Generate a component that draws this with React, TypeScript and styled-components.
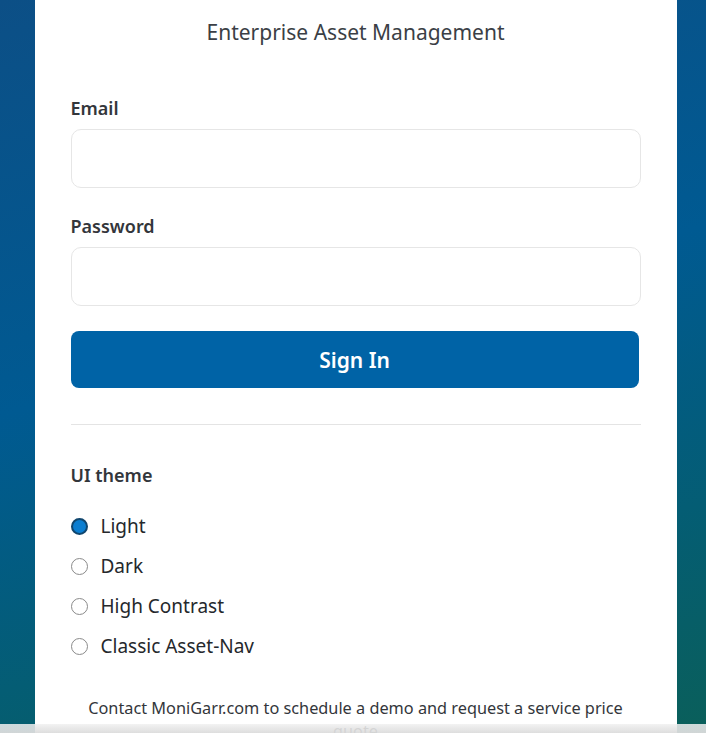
import React, { useState } from 'react';
import styled, { createGlobalStyle } from 'styled-components';

const GlobalStyle = createGlobalStyle`
	html, body {
		margin: 0;
		padding: 0;
		height: 100%;
		overflow: hidden;
	}
	body {
		font-family: "Noto Sans", "Open Sans", sans-serif;
		background: linear-gradient(165deg, #0c4f86 0%, #005a92 45%, #045d74 75%, #0a5f5a 100%);
	}
	#root {
		height: 100%;
	}
`;

const Page = styled.div`
	height: 100%;
	display: flex;
	justify-content: center;
	padding-left: 35px;
	padding-right: 30px;
	box-sizing: border-box;
`;

const Card = styled.main`
	flex: 1;
	background: #fff;
	padding: 18px 36px 0;
	box-sizing: border-box;
	display: flex;
	flex-direction: column;
`;

const Subtitle = styled.h2`
	margin: 0;
	text-align: center;
	font-size: 21px;
	font-weight: 400;
	color: #3b3f46;
	line-height: 28px;
`;

const Form = styled.form`
	display: flex;
	flex-direction: column;
	margin-top: 50px;
`;

const FieldLabel = styled.label`
	font-size: 18px;
	font-weight: 600;
	color: #33363b;
	line-height: 24px;
	margin-bottom: 9px;
`;

const TextInput = styled.input`
	height: 59px;
	border: 1px solid #e6e6e6;
	border-radius: 10px;
	padding: 0 14px;
	font-size: 16px;
	font-family: inherit;
	box-sizing: border-box;
	margin-bottom: 26px;
	width: 570px;
	outline: none;
`;

const SubmitButton = styled.button`
	height: 57px;
	width: 568px;
	border: none;
	border-radius: 8px;
	background: #0063a6;
	color: #fff;
	font-family: inherit;
	font-size: 21px;
	font-weight: 600;
	margin-top: -1px;
	cursor: pointer;
`;

const Divider = styled.hr`
	border: none;
	border-top: 1px solid #e4e4e4;
	margin: 36px 0 0;
	width: 570px;
`;

const SectionLabel = styled.div`
	font-size: 18px;
	font-weight: 600;
	color: #33363b;
	line-height: 24px;
	margin-top: 38px;
`;

const RadioList = styled.div`
	display: flex;
	flex-direction: column;
	gap: 16px;
	margin-top: 27px;
`;

const RadioRow = styled.label`
	display: flex;
	align-items: center;
	gap: 13px;
	font-size: 19px;
	color: #25282c;
	line-height: 24px;
	cursor: pointer;
`;

const RadioDot = styled.span<{ $checked: boolean }>`
	width: 17px;
	height: 17px;
	flex: none;
	box-sizing: border-box;
	border-radius: 50%;
	border: ${({ $checked }) => ($checked ? '2px solid #10466e' : '1px solid #8a8a8a')};
	background: ${({ $checked }) => ($checked ? '#0b7ed1' : '#fff')};
	box-shadow: ${({ $checked }) => ($checked ? 'inset 0 0 0 1px #0b7ed1' : 'none')};
`;

const HiddenRadio = styled.input`
	display: none;
`;

const Footer = styled.p`
	margin: 39px 0 0;
	text-align: center;
	font-size: 16.3px;
	line-height: 23px;
	color: #33363b;
	padding: 0 10px;
`;

const BottomShade = styled.div`
	position: fixed;
	left: 0;
	right: 0;
	bottom: 0;
	height: 9px;
	background: linear-gradient(rgba(240, 240, 240, 0.85), rgba(220, 220, 220, 0.95));
`;

const themes = ['Light', 'Dark', 'High Contrast', 'Classic Asset-Nav'];

export default function App() {
	const [theme, setTheme] = useState('Light');

	return (
		<>
			<GlobalStyle />
			<Page>
				<Card>
					<Subtitle>Enterprise Asset Management</Subtitle>
					<Form onSubmit={(e) => e.preventDefault()}>
						<FieldLabel htmlFor="email">Email</FieldLabel>
						<TextInput id="email" type="email" />
						<FieldLabel htmlFor="password">Password</FieldLabel>
						<TextInput id="password" type="password" />
						<SubmitButton type="submit">Sign In</SubmitButton>
					</Form>
					<Divider />
					<SectionLabel>UI theme</SectionLabel>
					<RadioList>
						{themes.map((t) => (
							<RadioRow key={t}>
								<HiddenRadio
									type="radio"
									name="theme"
									checked={theme === t}
									onChange={() => setTheme(t)}
								/>
								<RadioDot $checked={theme === t} />
								{t}
							</RadioRow>
						))}
					</RadioList>
					<Footer>Contact MoniGarr.com to schedule a demo and request a service price quote</Footer>
				</Card>
			</Page>
			<BottomShade />
		</>
	);
}
